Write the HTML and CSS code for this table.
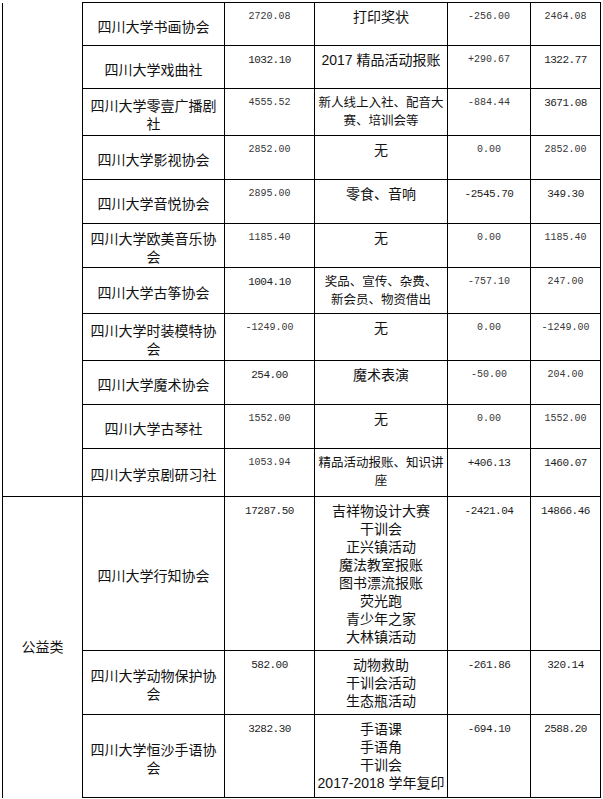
FILE: index.html
```html
<!DOCTYPE html>
<html lang="zh">
<head>
<meta charset="utf-8">
<title>社团经费</title>
<link rel="stylesheet" href="styles.css">
</head>
<body>
<table class="ledger">
  <colgroup>
    <col class="c-cat"><col class="c-name"><col class="c-amt"><col class="c-desc"><col class="c-chg"><col class="c-end">
  </colgroup>
  <tbody>
    <tr class="h43">
      <td class="cat cat-top" rowspan="11"></td>
      <td class="name">四川大学书画协会</td>
      <td class="num">2720.08</td>
      <td class="desc">打印奖状</td>
      <td class="num">-256.00</td>
      <td class="num">2464.08</td>
    </tr>
    <tr class="h43">
      <td class="name">四川大学戏曲社</td>
      <td class="num big">1032.10</td>
      <td class="desc">2017 精品活动报账</td>
      <td class="num">+290.67</td>
      <td class="num big">1322.77</td>
    </tr>
    <tr class="h47">
      <td class="name">四川大学零壹广播剧<br>社</td>
      <td class="num">4555.52</td>
      <td class="desc sm">新人线上入社、配音大<br>赛、培训会等</td>
      <td class="num">-884.44</td>
      <td class="num big">3671.08</td>
    </tr>
    <tr class="h44">
      <td class="name">四川大学影视协会</td>
      <td class="num">2852.00</td>
      <td class="desc">无</td>
      <td class="num">0.00</td>
      <td class="num">2852.00</td>
    </tr>
    <tr class="h44">
      <td class="name">四川大学音悦协会</td>
      <td class="num">2895.00</td>
      <td class="desc">零食、音响</td>
      <td class="num big">-2545.70</td>
      <td class="num big">349.30</td>
    </tr>
    <tr class="h44">
      <td class="name">四川大学欧美音乐协<br>会</td>
      <td class="num">1185.40</td>
      <td class="desc">无</td>
      <td class="num">0.00</td>
      <td class="num">1185.40</td>
    </tr>
    <tr class="h46">
      <td class="name">四川大学古筝协会</td>
      <td class="num big">1004.10</td>
      <td class="desc sm">奖品、宣传、杂费、<br>新会员、物资借出</td>
      <td class="num">-757.10</td>
      <td class="num">247.00</td>
    </tr>
    <tr class="h47">
      <td class="name">四川大学时装模特协<br>会</td>
      <td class="num">-1249.00</td>
      <td class="desc">无</td>
      <td class="num">0.00</td>
      <td class="num">-1249.00</td>
    </tr>
    <tr class="h44">
      <td class="name">四川大学魔术协会</td>
      <td class="num big">254.00</td>
      <td class="desc">魔术表演</td>
      <td class="num">-50.00</td>
      <td class="num">204.00</td>
    </tr>
    <tr class="h44">
      <td class="name">四川大学古琴社</td>
      <td class="num">1552.00</td>
      <td class="desc">无</td>
      <td class="num">0.00</td>
      <td class="num">1552.00</td>
    </tr>
    <tr class="h48">
      <td class="name">四川大学京剧研习社</td>
      <td class="num">1053.94</td>
      <td class="desc sm">精品活动报账、知识讲<br>座</td>
      <td class="num big">+406.13</td>
      <td class="num big">1460.07</td>
    </tr>
    <tr class="h154">
      <td class="cat cat-bottom" rowspan="3">公益类</td>
      <td class="name">四川大学行知协会</td>
      <td class="num big">17287.50</td>
      <td class="desc">吉祥物设计大赛<br>干训会<br>正兴镇活动<br>魔法教室报账<br>图书漂流报账<br>荧光跑<br>青少年之家<br>大林镇活动</td>
      <td class="num big">-2421.04</td>
      <td class="num big">14866.46</td>
    </tr>
    <tr class="h64">
      <td class="name">四川大学动物保护协<br>会</td>
      <td class="num big">582.00</td>
      <td class="desc">动物救助<br>干训会活动<br>生态瓶活动</td>
      <td class="num big">-261.86</td>
      <td class="num big">320.14</td>
    </tr>
    <tr class="h83">
      <td class="name">四川大学恒沙手语协<br>会</td>
      <td class="num big">3282.30</td>
      <td class="desc">手语课<br>手语角<br>干训会<br>2017-2018 学年复印</td>
      <td class="num big">-694.10</td>
      <td class="num big">2588.20</td>
    </tr>
  </tbody>
</table>
</body>
</html>
```
FILE: styles.css
```css
html, body {
  margin: 0;
  padding: 0;
  background: #ffffff;
}

body {
  font-family: "Liberation Sans", "Noto Sans CJK SC", sans-serif;
  color: #111111;
  overflow: hidden;
}

.ledger {
  border-collapse: collapse;
  table-layout: fixed;
  width: 598px;
  margin: 2px 0 0 2px;
}

.c-cat { width: 80px; }
.c-name { width: 142px; }
.c-amt { width: 90px; }
.c-desc { width: 133px; }
.c-chg { width: 83px; }
.c-end { width: 70px; }

.ledger td {
  border: 1px solid #000000;
  padding: 5px 0 0 0;
  text-align: center;
  vertical-align: top;
  font-size: 14px;
  line-height: 18px;
  white-space: nowrap;
  overflow: hidden;
}

.ledger td.cat {
  vertical-align: middle;
  padding: 0;
}

.ledger td.cat-top {
  border-top: none;
}

.ledger td.cat-bottom {
  border-bottom: none;
}

.ledger td.name {
  vertical-align: middle;
  padding: 5px 0 0 0;
}

.ledger td.num {
  font-family: "Liberation Mono", "DejaVu Sans Mono", monospace;
  font-size: 10px;
  color: #383838;
}

.ledger td.num.big {
  font-size: 11px;
  letter-spacing: -0.5px;
  color: #1e1e1e;
}

.ledger td.desc.sm {
  font-size: 12.5px;
}

.h43 { height: 43px; }
.h44 { height: 44px; }
.h46 { height: 46px; }
.h47 { height: 47px; }
.h48 { height: 48px; }
.h154 { height: 154px; }
.h64 { height: 64px; }
.h83 { height: 83px; }
```
